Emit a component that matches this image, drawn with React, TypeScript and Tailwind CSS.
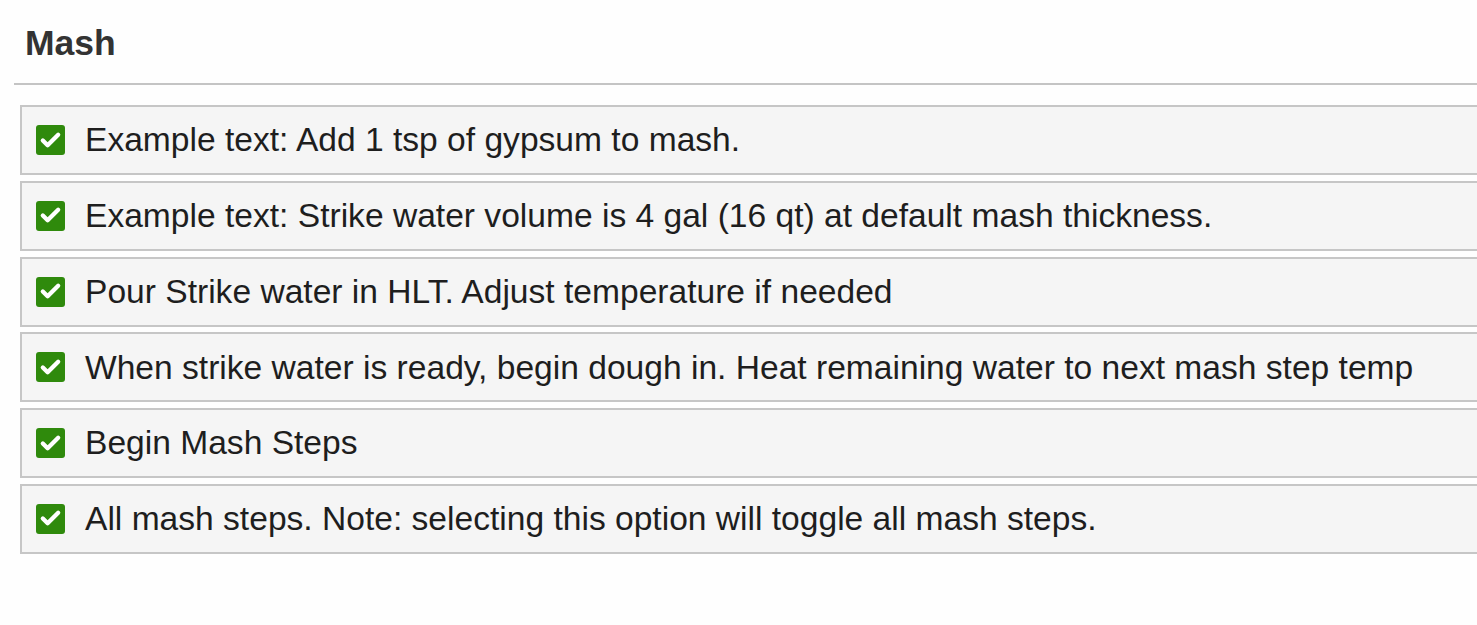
import { Check } from "lucide-react"

const steps = [
  "Example text: Add 1 tsp of gypsum to mash.",
  "Example text: Strike water volume is 4 gal (16 qt) at default mash thickness.",
  "Pour Strike water in HLT. Adjust temperature if needed",
  "When strike water is ready, begin dough in. Heat remaining water to next mash step temp",
  "Begin Mash Steps",
  "All mash steps. Note: selecting this option will toggle all mash steps.",
]

export default function App() {
  return (
    <div
      className="w-[1477px] h-[625px] overflow-hidden bg-[#fefefe]"
      style={{ fontFamily: '"Liberation Sans", Arial, sans-serif' }}
    >
      <div className="pl-[14px]">
        <h2 className="pl-[11px] pt-[21px] pb-[18px] text-[35.5px] leading-[44px] font-bold text-[#333333]">
          Mash
        </h2>
        <div className="h-[2px] bg-[#c4c4c4]" />
      </div>

      <ul className="ml-[20px] mt-[20px] w-[1480px] flex flex-col gap-[5.8px]">
        {steps.map((step) => (
          <StepRow key={step} label={step} />
        ))}
      </ul>
    </div>
  )
}

function StepRow({ label }: { label: string }) {
  return (
    <li className="h-[70px] border-2 border-[#c6c6c6] bg-[#f5f5f5] flex items-center pl-[14px]">
      <span className="w-[29px] h-[30px] rounded-[3px] bg-[#2f8a0c] flex items-center justify-center shrink-0">
        <Check className="w-[23px] h-[23px] text-white" strokeWidth={4.5} />
      </span>
      <span className="ml-[20px] text-[33.6px] leading-none text-[#1e1e1e]">{label}</span>
    </li>
  )
}
